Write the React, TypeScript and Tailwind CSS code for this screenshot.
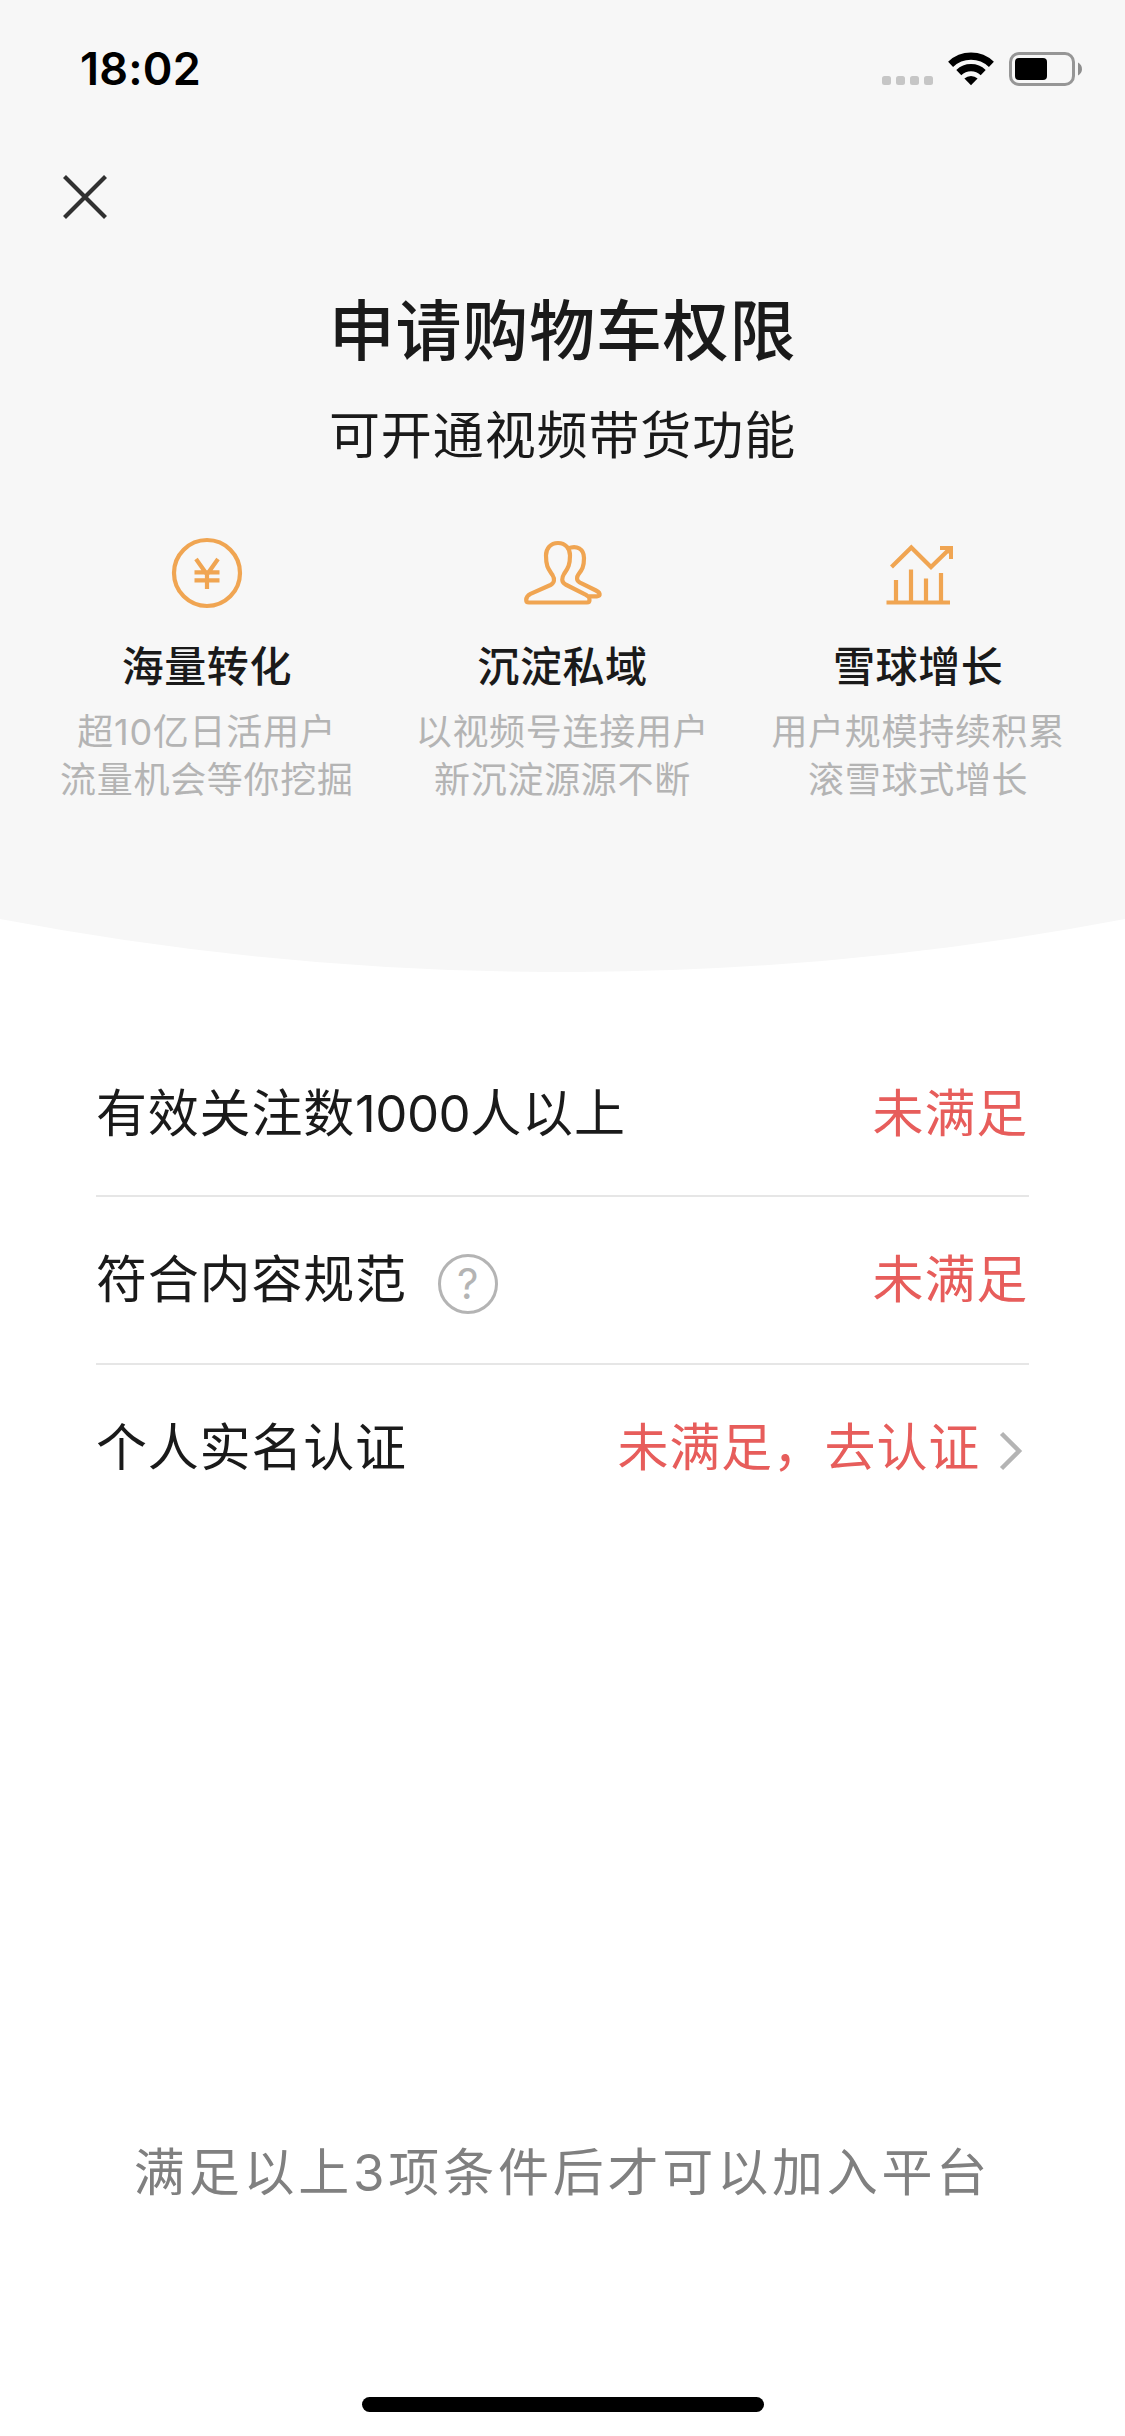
import type { ReactNode } from "react";

const ORANGE = "#f0a552";

function StatusBar() {
  return (
    <div className="flex h-[132px] items-start justify-between pl-[80px] pr-[43px] pt-[40px]">
      <div className="text-[45px] font-semibold leading-[58px] tracking-[0.2px] text-black">18:02</div>
      <div className="mt-[12px] flex h-[34px] items-end">
        <div className="mb-px flex gap-[5px]">
          {[0, 1, 2, 3].map((i) => (
            <span key={i} className="size-[9px] rounded-[2.5px] bg-[#c6c6c6]" />
          ))}
        </div>
        <svg className="ml-[15px] h-[34px] w-[46px]" viewBox="0 0 46 34">
          <g fill="none" stroke="#000" strokeWidth="7.2">
            <path d="M2.6 12.4 A29.5 29.5 0 0 1 43.4 12.4" />
            <path d="M10.8 20.6 A17.6 17.6 0 0 1 35.2 20.6" />
          </g>
          <path d="M23 33.2 L16.4 26.6 A9.4 9.4 0 0 1 29.6 26.6 Z" fill="#000" />
        </svg>
        <svg className="ml-[15px] h-[34px] w-[73px]" viewBox="0 0 73 34">
          <rect x="1.5" y="1.5" width="63" height="31" rx="8.5" fill="none" stroke="#969696" strokeWidth="3" />
          <rect x="6" y="6" width="32" height="22" rx="4" fill="#000" />
          <path d="M69 10.5 C74.3 13 74.3 21 69 23.5 Z" fill="#8e8e8e" />
        </svg>
      </div>
    </div>
  );
}

function YuanIcon() {
  return (
    <svg className="h-[84px] w-[100px]" viewBox="0 0 100 84" fill="none" stroke={ORANGE} strokeWidth="4.2">
      <circle cx="50" cy="43" r="33" />
      <path d="M39 29 L50 44.5 L61 29 M50 43 V59 M37.5 42.4 H62.5 M37.5 50.4 H62.5" />
    </svg>
  );
}

function PeopleIcon() {
  return (
    <svg
      className="h-[84px] w-[100px]"
      viewBox="-2 0 100 84"
      fill="none"
      stroke={ORANGE}
      strokeWidth="4.2"
      strokeLinejoin="round"
    >
      <path d="M43 13 C35.5 13 31 18.5 31 25.5 C31 37 33.5 39 37.5 45 C40 49 39.5 53 35.5 55 L15.5 63.8 C11.5 65.8 11.2 68 11.2 70 Q11.2 72.5 13.8 72.5 H72 Q74.5 72.5 74.5 70 C74.5 67.5 74 66.5 71 64.8 L50.5 54.5 C46 52 46.8 47.5 49 44 C52.5 38.5 55 36 55 25.5 C55 18.5 50.5 13 43 13 Z" />
      <path d="M53 18.5 C62 14.5 69 19.5 69 28 C69 37 67 40 63.8 43.8 C61.5 47 61 50.5 65 52.6 L81 60.5 C84.5 62.3 84.9 63.5 84.6 65 Q84.2 66.3 82 66.3 H74" />
    </svg>
  );
}

function GrowthIcon() {
  return (
    <svg className="h-[84px] w-[100px]" viewBox="1 0 100 84" fill="none" stroke={ORANGE} strokeWidth="4.2">
      <path d="M19.5 72.5 H83" />
      <path d="M29 72 V50 M44 72 V39.5 M59 72 V48.5 M74 72 V43" />
      <path d="M24.5 37 L44.3 17.5 L64 37 L83 18.5" />
      <path d="M73 16 H86 V29 H82 V24 L78.5 20 H73 Z" fill={ORANGE} stroke="none" />
    </svg>
  );
}

function Feature({ icon, title, lines }: { icon: ReactNode; title: string; lines: string[] }) {
  return (
    <div className="flex flex-1 flex-col items-center">
      {icon}
      <h2 className="mt-[23px] text-[42px] font-medium leading-[60px] tracking-[0.6px] text-[#1a1a1a]">{title}</h2>
      <p className="mt-[11px] whitespace-nowrap text-center text-[36px] leading-[48px] tracking-[0.7px] text-[#b4b4b4]">
        {lines[0]}
        <br />
        {lines[1]}
      </p>
    </div>
  );
}

function Row({ label, children, last }: { label: ReactNode; children: ReactNode; last?: boolean }) {
  return (
    <div
      className={
        last
          ? "flex h-[168px] items-center justify-between pb-[3px]"
          : "flex h-[168px] items-center justify-between border-b-2 border-[#e6e6e6]"
      }
    >
      <div className="flex items-center text-[#1a1a1a]">{label}</div>
      <div className="flex items-center text-[#e75d5b]">{children}</div>
    </div>
  );
}

export default function App() {
  return (
    <div className="flex h-[2436px] w-[1125px] flex-col overflow-hidden bg-white font-['Inter','Noto_Sans_CJK_SC',sans-serif]">
      <header className="h-[919px] shrink-0 bg-[#f7f7f7]">
        <StatusBar />
        <div className="flex h-[130px] items-center pl-[62px]">
          <svg className="size-[46px]" viewBox="0 0 46 46" stroke="#303030" strokeWidth="4.2">
            <path d="M2.5 2.5 L43.5 43.5 M43.5 2.5 L2.5 43.5" />
          </svg>
        </div>
        <h1 className="mt-[22px] text-center text-[66px] font-medium leading-[94px] tracking-[0.8px] text-[#1a1a1a]">
          申请购物车权限
        </h1>
        <p className="mt-[22px] text-center text-[51px] leading-[72px] tracking-[0.9px] text-[#1a1a1a]">
          可开通视频带货功能
        </p>
        <div className="mt-[58px] flex px-[29px]">
          <Feature icon={<YuanIcon />} title="海量转化" lines={["超10亿日活用户", "流量机会等你挖掘"]} />
          <Feature icon={<PeopleIcon />} title="沉淀私域" lines={["以视频号连接用户", "新沉淀源源不断"]} />
          <Feature icon={<GrowthIcon />} title="雪球增长" lines={["用户规模持续积累", "滚雪球式增长"]} />
        </div>
      </header>
      <svg className="h-[53px] w-full shrink-0" viewBox="0 0 1125 53">
        <path d="M0 0 A3009 3009 0 0 0 1125 0 Z" fill="#f7f7f7" />
      </svg>

      <main className="mt-[57px] px-[96px] text-[51px] leading-[72px] tracking-[0.8px]">
        <Row
          label={
            <span className="pt-[3px]">
              有效关注数<span className="tracking-[-0.5px]">1000</span>人以上
            </span>
          }
        >
          <span className="pr-px pt-[3px]">未满足</span>
        </Row>
        <Row
          label={
            <>
              符合内容规范
              <span className="ml-[31px] mt-[8px] flex size-[60px] items-center justify-center rounded-full border-[3px] border-[#b4b4b4] text-[42px] font-normal leading-none tracking-normal text-[#b4b4b4]">
                ?
              </span>
            </>
          }
        >
          <span className="pr-px">未满足</span>
        </Row>
        <Row label="个人实名认证" last>
          未满足，去认证
          <svg className="ml-[19px] mr-[6px] mt-[6px] h-[40px] w-[24px]" viewBox="0 0 24 40" fill="none" stroke="#b4b4b4" strokeWidth="4.5">
            <path d="M2.5 2.5 L20 20 L2.5 37.5" />
          </svg>
        </Row>
      </main>

      <p className="mt-auto text-center text-[51px] leading-[72px] tracking-[3.8px] text-[#808080]">
        满足以上3项条件后才可以加入平台
      </p>
      <div className="mx-auto mb-[24px] mt-[188px] h-[15px] w-[402px] shrink-0 rounded-full bg-black" />
    </div>
  );
}
